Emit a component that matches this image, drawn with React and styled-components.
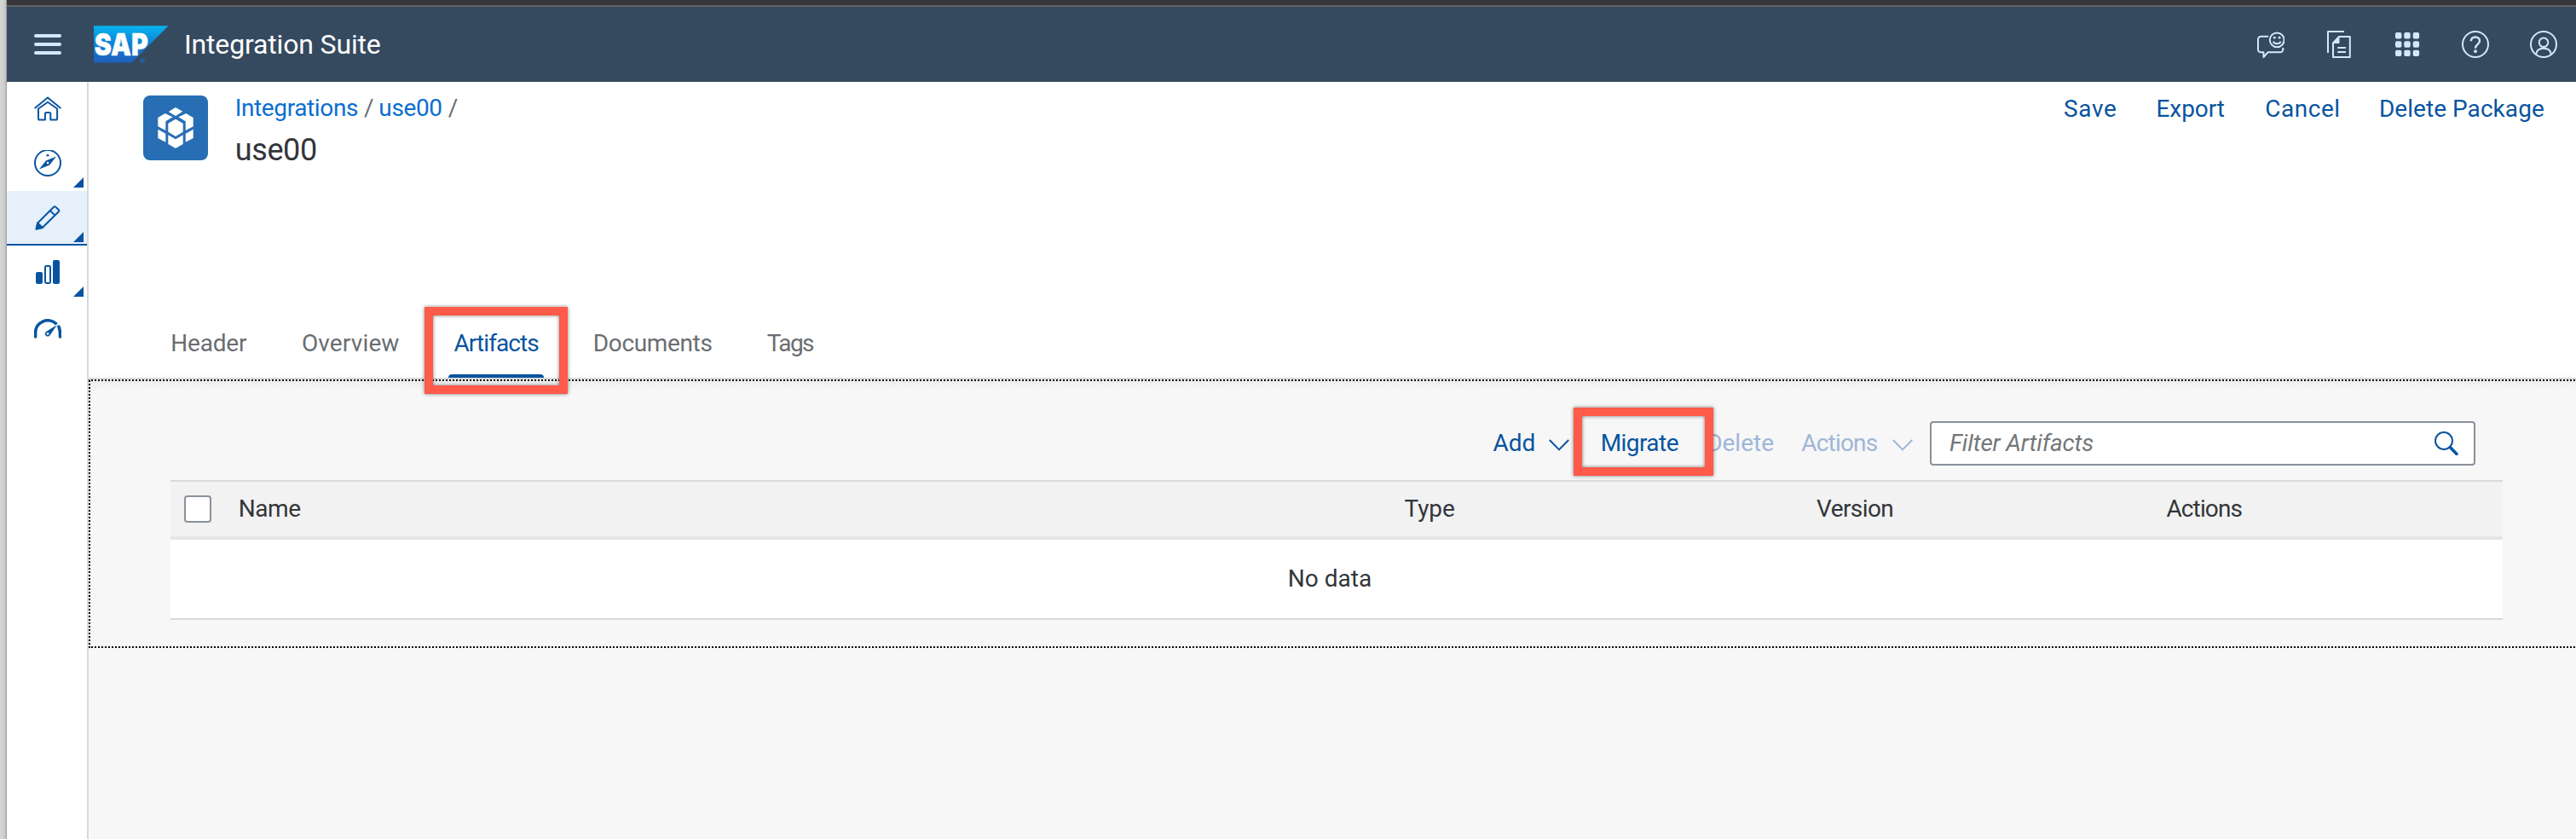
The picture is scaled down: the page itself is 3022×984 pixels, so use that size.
import React from 'react';
import styled, { createGlobalStyle, css } from 'styled-components';

const c = {
  shell: '#354a5f',
  shellIcon: '#d1e8ff',
  blue: '#0854a0',
  muted: '#9fb6d7',
  link: '#0a6ed1',
  text: '#32363a',
  label: '#6a6d70',
  field: '#89919a',
  line: '#d9d9d9',
  page: '#f7f7f7',
  mark: '#ff5a4a',
};

const GlobalStyle = createGlobalStyle`
  *, *::before, *::after { box-sizing: border-box; }
  body { margin: 0; background: ${c.page}; }
  button { border: 0; background: none; padding: 0; font: inherit; color: inherit; }
  svg { display: block; flex: none; }
`;

const Screen = styled.div`
  display: flex;
  width: 3022px;
  height: 984px;
  overflow: hidden;
  font: 28px/33px Roboto, "Liberation Sans", sans-serif;
  color: ${c.text};
`;

const WindowEdge = styled.div`
  flex: none;
  width: 8px;
  background: linear-gradient(90deg, #d6d6d6 0, #cdcdcd 5px, #b8b8b8 7px, #8f8f8f 8px);
`;

const AppColumn = styled.div`
  flex: 1;
  min-width: 0;
  display: flex;
  flex-direction: column;
`;

const BrowserBar = styled.div`
  flex: none;
  height: 8px;
  background: #36363a;
  border-bottom: 2px solid #606062;
`;

const ShellBar = styled.header`
  flex: none;
  height: 88px;
  display: flex;
  align-items: center;
  padding: 0 22px 0 32px;
  background: ${c.shell};
`;

const MenuButton = styled.button`
  width: 32px;
  height: 24px;
  display: flex;
  flex-direction: column;
  gap: 6px;
  margin-right: 37.5px;
`;

const MenuLine = styled.span`
  height: 4px;
  border-radius: 2px;
  background: ${c.shellIcon};
`;

const ProductTitle = styled.h1`
  margin: 0 auto 0 18.5px;
  font-size: 32px;
  line-height: 38px;
  font-weight: 400;
  letter-spacing: -0.16px;
  color: #fff;
`;

const ShellActions = styled.div`
  display: flex;
  gap: 48px;
  color: ${c.shellIcon};
`;

const Body = styled.div`
  flex: 1;
  min-height: 0;
  display: flex;
`;

const SideNav = styled.nav`
  flex: none;
  width: 96px;
  background: #fff;
  border-right: 2px solid ${c.line};
  color: ${c.blue};
`;

const NavItem = styled.div`
  position: relative;
  height: 64px;
  padding: 16px 0 0 32px;
  ${p => p.$selected && css`
    background: #e5f0fa;
    border-bottom: 2px solid ${c.blue};
  `}
`;

const SubmenuCorner = styled.span`
  position: absolute;
  right: 4px;
  bottom: ${p => (p.$selected ? 2 : 4)}px;
  width: 12px;
  height: 12px;
  background: ${c.blue};
  clip-path: polygon(100% 0, 100% 100%, 0 100%);
`;

const Main = styled.main`
  flex: 1;
  min-width: 0;
  background: ${c.page};
`;

const ObjectHeader = styled.section`
  height: 347px;
  display: flex;
  flex-direction: column;
  justify-content: space-between;
  background: linear-gradient(0deg, #fcfcfc 0, #fff 8px);
`;

const TitleRow = styled.div`
  display: flex;
  align-items: flex-start;
  padding: 14px 37.2px 0 64px;
`;

const PackageBadge = styled.div`
  width: 76px;
  height: 76px;
  margin: 2px 31.7px 0 0;
  border-radius: 8px;
  background: #286eb4;
`;

const TitleBlock = styled.div`
  margin-right: auto;
`;

const Breadcrumbs = styled.div`
  display: flex;
  margin-bottom: 12px;
`;

const Crumb = styled.a`
  color: ${c.link};
  letter-spacing: -0.37px;
`;

const Slash = styled.span`
  margin: 0 ${p => p.$after || 0}px 0 7px;
  letter-spacing: -2.3px;
  color: ${c.label};
`;

const PackageTitle = styled.h2`
  margin: 0;
  font-size: 36px;
  line-height: 42px;
  font-weight: 400;
  letter-spacing: -0.36px;
`;

const HeaderActions = styled.div`
  display: flex;
  padding-top: 1px;
`;

const TextButton = styled.button`
  position: relative;
  flex: none;
  padding-bottom: 1px;
  margin-right: ${p => p.$after || 0}px;
  letter-spacing: ${p => p.$track || 0}px;
  white-space: nowrap;
  color: ${p => (p.$muted ? c.muted : c.blue)};
`;

const TabStrip = styled.div`
  display: flex;
  gap: 64px;
  padding-left: 96.2px;
`;

const Tab = styled.div`
  position: relative;
  width: ${p => p.$width}px;
  padding-bottom: ${p => (p.$active ? 0 : 24)}px;
  letter-spacing: ${p => p.$track}px;
  white-space: nowrap;
  color: ${p => (p.$active ? c.blue : c.label)};
`;

const TabIndicator = styled.div`
  height: 4px;
  margin: 20px -6.3px 0;
  border-radius: 4px 4px 0 0;
  background: ${c.blue};
`;

const Highlight = styled.span`
  position: absolute;
  z-index: 2;
  left: ${p => p.$left}px;
  top: ${p => p.$top}px;
  width: ${p => p.$width}px;
  height: ${p => p.$height}px;
  border: 10px solid ${c.mark};
  filter: drop-shadow(0 0.5px 2px rgba(0, 0, 0, 0.5));
  pointer-events: none;
`;

const ArtifactsPanel = styled.section`
  height: 317px;
  border-top: 2px solid ${c.line};
  padding: 49px 86px 0 96px;
  background:
    repeating-linear-gradient(90deg, #000 0 1px, transparent 1px 3px, #000 3px 4px) 0 0 / 100% 2px no-repeat,
    repeating-linear-gradient(90deg, #000 0 1px, transparent 1px 3px, #000 3px 4px) 0 100% / 100% 2px no-repeat,
    repeating-linear-gradient(180deg, transparent 0 1px, #000 1px 3px, transparent 3px 4px) 0 0 / 2px 100% no-repeat,
    linear-gradient(180deg, #ececec, ${c.page}) 0 0 / 100% 12px no-repeat,
    ${c.page};
`;

const Toolbar = styled.div`
  height: 52px;
  display: flex;
  align-items: center;
  justify-content: flex-end;
  padding-right: 32px;
`;

const Chevron = styled.svg`
  width: 24px;
  height: 14px;
  margin: 3px ${p => p.$after}px 0 0;
  fill: none;
  stroke: ${p => (p.$muted ? c.muted : c.blue)};
  stroke-width: 2;
`;

const SearchField = styled.div`
  flex: none;
  width: 640px;
  height: 52px;
  display: flex;
  align-items: center;
  justify-content: space-between;
  padding: 0 18px 0 21px;
  border: 2px solid ${c.field};
  border-radius: 4px;
  background: #fff;
  color: ${c.blue};
`;

const Placeholder = styled.span`
  padding-bottom: 1px;
  font-style: italic;
  letter-spacing: -0.18px;
  color: #74777a;
`;

const Table = styled.div`
  margin-top: 17px;
  border-top: 2px solid ${c.line};
  border-bottom: 2px solid ${c.line};
`;

const HeadRow = styled.div`
  height: 68px;
  display: grid;
  grid-template-columns: 79.7px 1367.8px 483.5px 410.4px 1fr;
  align-items: center;
  background: #f2f2f2;
  border-bottom: 4px solid #e5e5e5;
`;

const HeadCell = styled.span`
  padding-bottom: 1px;
  letter-spacing: ${p => p.$track}px;
`;

const CheckBox = styled.span`
  width: 32px;
  height: 32px;
  margin-left: 16px;
  border: 2px solid ${c.field};
  border-radius: 4px;
  background: #fff;
`;

const EmptyRow = styled.div`
  height: 92px;
  display: flex;
  align-items: center;
  justify-content: center;
  padding: 0 16px 1px 0;
  background: #fff;
`;

const Icon = ({ children, size = 32, width = 2 }) => (
  <svg width={size} height={size} viewBox={`0 0 ${size} ${size}`} fill="none" stroke="currentColor" strokeWidth={width} strokeLinejoin="round">
    {children}
  </svg>
);

const SapLogo = () => (
  <svg width="88" height="44" viewBox="0 0 88 44">
    <defs>
      <linearGradient id="sap" x1="0" y1="0" x2="0" y2="1">
        <stop offset="0" stopColor="#06b4ef" />
        <stop offset="0.5" stopColor="#0f80d4" />
        <stop offset="1" stopColor="#1f5fbc" />
      </linearGradient>
    </defs>
    <path d="M0 0.3H87.5L44.5 43.5H0Z" fill="url(#sap)" />
    <text x="0.8" y="34.6" fontFamily="Inter, 'Liberation Sans', sans-serif" fontWeight="900" fontSize="36" textLength="63" lengthAdjust="spacingAndGlyphs" fill="#fff" stroke="#fff" strokeWidth="0.4">SAP</text>
    <circle cx="57" cy="41" r="3" fill="#2a5a9c" />
  </svg>
);

const CubeIcon = () => (
  <svg width="76" height="76" viewBox="0 0 76 76" fill="#fff">
    <path d="M38 14 46.3 18.7 38 24 29.7 19Z" />
    <path d="M38 27.7 46.7 32.7V42.7L38 48 29.3 42.7V32.7Z" />
    <path d="M17.3 26 25.7 21 34.6 25.2 26.3 30.3V41L17.3 36.3Z" />
    <path d="M58.7 26 50.3 21 41.4 25.2 49.7 30.3V41L58.7 36.3Z" />
    <path d="M17.3 39.7 26.3 44.7V54.7L17.3 50Z" />
    <path d="M58.7 39.7 49.7 44.7V54.7L58.7 50Z" />
    <path d="M29.3 46.3 38 51.3 46.7 46.3V57L38 62 29.3 57Z" />
  </svg>
);

const FeedbackIcon = () => (
  <Icon>
    <path d="M13 6.7H4.5A3.5 3.5 0 0 0 1 10.2V22a3.3 3.3 0 0 0 3.3 3.3H7.5V31l5-5.7H27a3.3 3.3 0 0 0 3.3-3.3v-2" />
    <circle cx="23.2" cy="10.8" r="8.4" />
    <path d="M18.7 12.8c1.8 3.2 7.2 3.2 9 0" />
    <circle cx="20.3" cy="8.2" r="1.4" fill="currentColor" stroke="none" />
    <circle cx="26.1" cy="8.2" r="1.4" fill="currentColor" stroke="none" />
  </Icon>
);

const CopyIcon = () => (
  <Icon>
    <path d="M22 1H3V26" />
    <path d="M16 7H28.8V31H9V14.5Z" />
    <path d="M16 7V14.5H9Z" fill="currentColor" strokeWidth="1" />
    <path d="M14.3 20H24M14.3 25H24" />
  </Icon>
);

const GridIcon = () => (
  <Icon>
    {[2, 12.3, 22.7].map(y => [2, 12.3, 22.7].map(x => (
      <rect key={`${x}-${y}`} x={x} y={y} width="7.4" height="7.4" rx="2" fill="currentColor" stroke="none" />
    )))}
  </Icon>
);

const HelpIcon = () => (
  <Icon>
    <circle cx="16" cy="16" r="15" />
    <path d="M10.8 12.2c0-3 2.2-4.7 5.1-4.7 3 0 5.1 1.8 5.1 4.4 0 4-5 3.9-5 8.8" strokeWidth="2.4" />
    <circle cx="16" cy="24.2" r="1.9" fill="currentColor" stroke="none" />
  </Icon>
);

const AccountIcon = () => (
  <Icon>
    <circle cx="16" cy="16" r="15" />
    <circle cx="16" cy="13.7" r="5.3" />
    <path d="M7.2 27.8C7.6 22.8 11.2 20.7 16 20.7s8.4 2.1 8.8 7.1" />
  </Icon>
);

const HomeIcon = () => (
  <Icon>
    <path d="M0.7 15 16 2.4 31.3 15" />
    <path d="M5 15.5V27a1.6 1.6 0 0 0 1.6 1.6h6.3V21.5a1.5 1.5 0 0 1 1.5-1.5h3.4a1.5 1.5 0 0 1 1.5 1.5v7.1h6.2A1.6 1.6 0 0 0 27.1 27V15.5L16 7.8Z" />
  </Icon>
);

const CompassIcon = () => (
  <Icon>
    <circle cx="16" cy="15" r="15" />
    <path d="M6 22.5 13.8 12.6 26 7.6 18.2 17.4Z" fill="currentColor" stroke="none" />
    <circle cx="16" cy="15" r="1.3" fill="#fff" stroke="none" />
    <path d="M16 4.3 18.2 7.2H13.8Z" fill="currentColor" stroke="none" />
  </Icon>
);

const PencilIcon = () => (
  <Icon>
    <path d="M4.2 21.5 23 2.8a1.6 1.6 0 0 1 2.3 0L28.8 6a1.6 1.6 0 0 1 0 2.2L9.8 27 3 28.3Z" />
    <path d="M18.8 7 24.6 12.6" />
    <path d="M4.2 21.5 9.8 27 2.4 28.8Z" fill="currentColor" />
  </Icon>
);

const BarsIcon = () => (
  <Icon>
    <rect x="2" y="15" width="8" height="14" rx="2" fill="currentColor" stroke="none" />
    <rect x="13" y="8" width="6" height="20" rx="1.4" />
    <rect x="22" y="1" width="8" height="28" rx="2" fill="currentColor" stroke="none" />
  </Icon>
);

const GaugeIcon = () => (
  <Icon>
    <path d="M1.6 27V22A14.4 14 0 0 1 25.8 11.6" strokeWidth="3.6" strokeLinecap="round" />
    <path d="M29 15.2C30.2 18 30.7 20.5 30.5 27" strokeWidth="3.6" strokeLinecap="round" />
    <path d="M28.4 11.6 18.9 25.6A3.6 3.6 0 1 1 13.7 20.7Z" fill="currentColor" stroke="#fff" strokeWidth="1" />
    <circle cx="16" cy="23.4" r="1.4" fill="#fff" stroke="none" />
  </Icon>
);

const SearchIcon = () => (
  <Icon size={28}>
    <circle cx="11" cy="11" r="10" />
    <path d="M18.5 18.8 26 26.4" strokeWidth="3.6" strokeLinecap="round" />
  </Icon>
);

const navItems = [
  { id: 'home', icon: HomeIcon },
  { id: 'discover', icon: CompassIcon, submenu: true },
  { id: 'design', icon: PencilIcon, submenu: true, selected: true },
  { id: 'monitor', icon: BarsIcon, submenu: true },
  { id: 'settings', icon: GaugeIcon },
];

const tabs = [
  { label: 'Header', width: 89.7, track: -0.18 },
  { label: 'Overview', width: 114.6, track: 0.15 },
  { label: 'Artifacts', width: 99.3, track: -0.92, active: true },
  { label: 'Documents', width: 140, track: -0.35 },
  { label: 'Tags', width: 54, track: -1.6 },
];

export default function App() {
  return (
    <>
      <GlobalStyle />
      <Screen>
        <WindowEdge />
        <AppColumn>
          <BrowserBar />
          <ShellBar>
            <MenuButton aria-label="Menu">
              <MenuLine /><MenuLine /><MenuLine />
            </MenuButton>
            <SapLogo />
            <ProductTitle>Integration Suite</ProductTitle>
            <ShellActions>
              <FeedbackIcon />
              <CopyIcon />
              <GridIcon />
              <HelpIcon />
              <AccountIcon />
            </ShellActions>
          </ShellBar>
          <Body>
            <SideNav>
              {navItems.map(({ id, icon: Glyph, submenu, selected }) => (
                <NavItem key={id} $selected={selected}>
                  <Glyph />
                  {submenu && <SubmenuCorner $selected={selected} />}
                </NavItem>
              ))}
            </SideNav>
            <Main>
              <ObjectHeader>
                <TitleRow>
                  <PackageBadge><CubeIcon /></PackageBadge>
                  <TitleBlock>
                    <Breadcrumbs>
                      <Crumb>Integrations</Crumb>
                      <Slash $after={8}>/</Slash>
                      <Crumb>use00</Crumb>
                      <Slash>/</Slash>
                    </Breadcrumbs>
                    <PackageTitle>use00</PackageTitle>
                  </TitleBlock>
                  <HeaderActions>
                    <TextButton $track={0.65} $after={46}>Save</TextButton>
                    <TextButton $track={-0.07} $after={47.4}>Export</TextButton>
                    <TextButton $track={0.52} $after={45.2}>Cancel</TextButton>
                    <TextButton $track={0.05}>Delete Package</TextButton>
                  </HeaderActions>
                </TitleRow>
                <TabStrip>
                  {tabs.map(t => (
                    <Tab key={t.label} $width={t.width} $track={t.track} $active={t.active}>
                      {t.label}
                      {t.active && <TabIndicator />}
                      {t.active && <Highlight $left={-34.5} $top={-26} $width={168} $height={102} />}
                    </Tab>
                  ))}
                </TabStrip>
              </ObjectHeader>
              <ArtifactsPanel>
                <Toolbar>
                  <TextButton $track={0.07} $after={15.2}>Add</TextButton>
                  <Chevron $after={37} viewBox="0 0 24 14"><path d="M0.8 1 12 12.4 23.2 1" /></Chevron>
                  <TextButton $track={-0.55} $after={33.2}>
                    Migrate
                    <Highlight $left={-31.5} $top={-25} $width={164} $height={80} />
                  </TextButton>
                  <TextButton $muted $after={32.2}>Delete</TextButton>
                  <TextButton $muted $track={-0.8} $after={17.6}>Actions</TextButton>
                  <Chevron $muted $after={20} viewBox="0 0 24 14"><path d="M0.8 1 12 12.4 23.2 1" /></Chevron>
                  <SearchField>
                    <Placeholder>Filter Artifacts</Placeholder>
                    <SearchIcon />
                  </SearchField>
                </Toolbar>
                <Table>
                  <HeadRow>
                    <CheckBox />
                    <HeadCell $track={-0.39}>Name</HeadCell>
                    <HeadCell $track={-0.06}>Type</HeadCell>
                    <HeadCell $track={-0.57}>Version</HeadCell>
                    <HeadCell $track={-0.85}>Actions</HeadCell>
                  </HeadRow>
                  <EmptyRow>No data</EmptyRow>
                </Table>
              </ArtifactsPanel>
            </Main>
          </Body>
        </AppColumn>
      </Screen>
    </>
  );
}
